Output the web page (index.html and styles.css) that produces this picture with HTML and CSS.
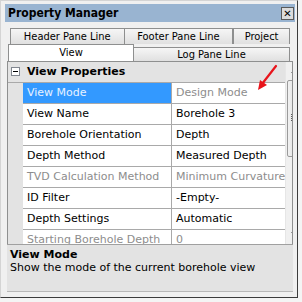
FILE: index.html
```html
<!DOCTYPE html>
<html>
<head>
<meta charset="utf-8">
<link rel="stylesheet" href="styles.css">
</head>
<body>
<div class="window">
  <div class="titlebar">
    <span class="title">Property Manager</span>
    <span class="close">✕</span>
  </div>
  <div class="tabs">
    <div class="tabrow back">
      <div class="tab t-header">Header Pane Line</div>
      <div class="tab t-footer">Footer Pane Line</div>
      <div class="tab t-project">Project</div>
    </div>
    <div class="tabrow front">
      <div class="tab active">View</div>
      <div class="tab t-log">Log Pane Line</div>
    </div>
  </div>
  <div class="panel">
    <div class="grid">
      <div class="row category">
        <div class="gutter"><span class="minus"></span></div>
        <div class="catname">View Properties</div>
      </div>
      <div class="row">
        <div class="gutter"></div>
        <div class="name selected">View Mode</div>
        <div class="value disabled">Design Mode</div>
      </div>
      <div class="row">
        <div class="gutter"></div>
        <div class="name">View Name</div>
        <div class="value">Borehole 3</div>
      </div>
      <div class="row">
        <div class="gutter"></div>
        <div class="name">Borehole Orientation</div>
        <div class="value">Depth</div>
      </div>
      <div class="row">
        <div class="gutter"></div>
        <div class="name">Depth Method</div>
        <div class="value">Measured Depth</div>
      </div>
      <div class="row">
        <div class="gutter"></div>
        <div class="name disabled">TVD Calculation Method</div>
        <div class="value disabled">Minimum Curvature</div>
      </div>
      <div class="row">
        <div class="gutter"></div>
        <div class="name">ID Filter</div>
        <div class="value">-Empty-</div>
      </div>
      <div class="row">
        <div class="gutter"></div>
        <div class="name">Depth Settings</div>
        <div class="value">Automatic</div>
      </div>
      <div class="row">
        <div class="gutter"></div>
        <div class="name disabled">Starting Borehole Depth</div>
        <div class="value disabled">0</div>
      </div>
    </div>
    <div class="scrollbar">
      <div class="arrow up"></div>
      <div class="track">
        <div class="thumb"><span class="grip"></span></div>
      </div>
      <div class="arrow down"></div>
    </div>
    <svg class="pointer" width="30" height="30" viewBox="0 0 30 30">
      <line x1="25" y1="2" x2="11" y2="20" stroke="#e8141b" stroke-width="2.2" stroke-linecap="round"/>
      <polygon points="7,26 9,16 16,21" fill="#e8141b"/>
    </svg>
  </div>
  <div class="desc">
    <div class="desc-title">View Mode</div>
    <div class="desc-text">Show the mode of the current borehole view</div>
  </div>
</div>
</body>
</html>
```
FILE: styles.css
```css
* { box-sizing: border-box; }
html, body { margin: 0; padding: 0; background: #f4f4f4; }
body {
  font-family: "DejaVu Sans", sans-serif;
  font-size: 11px;
  color: #000;
}
.window {
  width: 298px;
  height: 298px;
  background: #f0f0f0;
  border-top: 1px solid #d4d4d4;
  border-left: 1px solid #d4d4d4;
  border-right: 1px solid #3c3c3c;
  border-bottom: 1px solid #3c3c3c;
  padding: 3px 2px 0 4px;
  display: flex;
  flex-direction: column;
  position: relative;
}
.titlebar {
  height: 18px;
  background: #99b4d1;
  display: flex;
  align-items: center;
  justify-content: space-between;
  padding: 0 1px 0 3px;
}
.title {
  font-family: "DejaVu Sans Condensed", "DejaVu Sans", sans-serif;
  font-stretch: condensed;
  font-weight: bold;
  font-size: 12px;
}
.close {
  width: 13px;
  height: 13px;
  border: 1px solid #5a5a5a;
  background: #dcdcdc;
  font-size: 10px;
  font-weight: bold;
  line-height: 11px;
  text-align: center;
}
.tabs {
  margin-top: 6px;
  height: 33px;
  position: relative;
  margin-left: 3px;
  margin-right: 5px;
  font-family: "DejaVu Sans Condensed", "DejaVu Sans", sans-serif;
  font-stretch: condensed;
}
.tabrow { display: flex; }
.tab {
  height: 16px;
  border: 1px solid #8e8f8f;
  border-bottom: none;
  background: linear-gradient(#f6f6f6, #e0e0e0);
  text-align: center;
  line-height: 15px;
  white-space: nowrap;
}
.back { padding-left: 2px; }
.t-header { width: 115px; }
.t-footer { width: 109px; border-left: none; }
.t-project { width: 57px; border-left: 1px solid #8e8f8f; }
.front { align-items: flex-end; height: 17px; }
.tab.active {
  width: 126px;
  height: 17px;
  background: #fff;
  position: relative;
  z-index: 1;
  line-height: 16px;
}
.t-log {
  width: 156px;
  height: 14px;
  line-height: 14px;
  border-left: none;
}
.panel {
  height: 183px;
  margin-left: 2px;
  margin-right: 2px;
  border: 1px solid #8e8f8f;
  border-bottom: none;
  display: flex;
  background: #fff;
  position: relative;
  overflow: hidden;
}
.grid { flex: 1; display: flex; flex-direction: column; }
.row {
  display: flex;
  height: 21px;
  flex: none;
}
.gutter {
  width: 15px;
  background: #e3e3e3;
  flex: none;
  position: relative;
}
.minus {
  position: absolute;
  left: 3px;
  top: 5px;
  width: 9px;
  height: 9px;
  border: 1px solid #828790;
  background: #fff;
}
.minus::after {
  content: "";
  position: absolute;
  left: 1px;
  top: 3px;
  width: 5px;
  height: 1px;
  background: #000;
}
.category { background: #e3e3e3; border-bottom: 1px solid #a9a9a9; }
.catname { font-weight: bold; padding-left: 4px; line-height: 20px; }
.name, .value {
  line-height: 20px;
  border-bottom: 1px solid #a9a9a9;
  white-space: nowrap;
  overflow: hidden;
}
.name {
  width: 149px;
  padding-left: 4px;
  border-right: 1px solid #a9a9a9;
}
.value { flex: 1; padding-left: 4px; }
.selected { background: #3399ff; color: #e8f2ff; }
.disabled { color: #8d8d8d; }
.scrollbar {
  width: 17px;
  background: #f0f0f0;
  border-left: 1px solid #e6e6e6;
  display: flex;
  flex-direction: column;
  flex: none;
}
.arrow { height: 17px; position: relative; flex: none; }
.arrow::after {
  content: "";
  position: absolute;
  left: 5px;
  border-left: 3px solid transparent;
  border-right: 3px solid transparent;
}
.up::after { top: 8px; border-bottom: 3px solid #3d3d3d; }
.down::after { top: 5px; border-top: 3px solid #3d3d3d; }
.track { flex: 1; padding-top: 1px; }
.thumb {
  height: 77px;
  margin: 0 1px;
  border: 1px solid #9a9a9a;
  border-radius: 2px;
  background: linear-gradient(90deg, #f2f2f2, #e3e3e3 50%, #d7d7d7);
  position: relative;
}
.grip {
  position: absolute;
  left: 3px;
  top: 33px;
  width: 7px;
  height: 7px;
  background: repeating-linear-gradient(#5a5a5a 0 1px, transparent 1px 2px);
}
.pointer { position: absolute; left: 243px; top: 2px; }
.desc {
  flex: 1;
  margin-left: 2px;
  margin-right: 2px;
  border-top: 1px solid #a0a0a0;
  border-bottom: 1px solid #b8b8b8;
  background: #e3e3e3;
  padding: 3px 3px;
  margin-bottom: 5px;
}
.desc-title { font-weight: bold; line-height: 13px; }
.desc-text { line-height: 14px; }
```
